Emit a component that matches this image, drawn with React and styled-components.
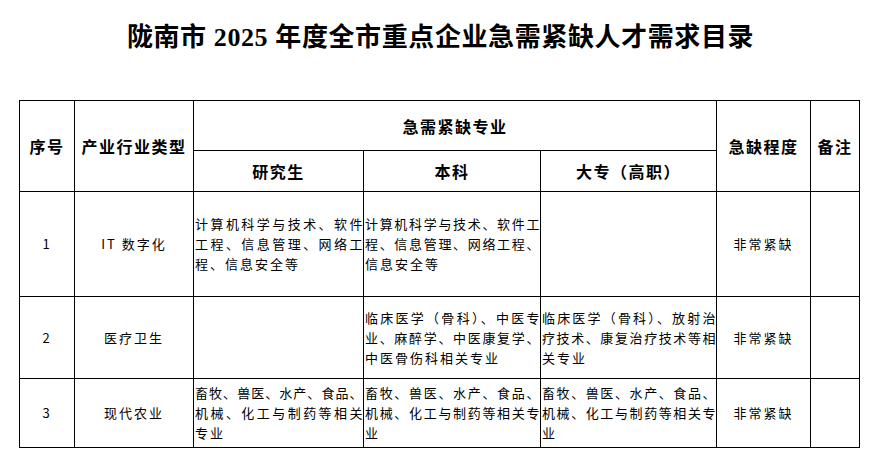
import React from 'react';
import styled, { createGlobalStyle } from 'styled-components';

const GlobalStyle = createGlobalStyle`
  html, body {
    margin: 0;
    padding: 0;
    background: #fff;
  }
  body {
    font-family: "Noto Sans CJK SC", "Liberation Sans", sans-serif;
    color: #000;
  }
`;

const Page = styled.div`
  width: 875px;
  height: 476px;
  background: #fff;
  overflow: hidden;
`;

const Title = styled.h1`
  margin: 0;
  padding: 21px 0 0 6px;
  text-align: center;
  font-family: "Liberation Serif", "Noto Sans CJK SC", serif;
  font-size: 26px;
  line-height: 34px;
  font-weight: 700;
  letter-spacing: 0.6px;
`;

const Sheet = styled.div`
  margin: 45px 0 0 19px;
  display: grid;
  grid-template-columns: 55px 119px 170px 177px 176px 94px 49px;
  grid-template-rows: 50px 41px 105px 82px 69px;
  width: max-content;
  border-top: 1px solid #000;
  border-left: 1px solid #000;
`;

const Cell = styled.div`
  box-sizing: border-box;
  border-right: 1px solid #000;
  border-bottom: 1px solid #000;
  grid-column: ${(p) => p.$col || 'auto'};
  grid-row: ${(p) => p.$row || 'auto'};
  display: flex;
  align-items: center;
  justify-content: ${(p) => (p.$left ? 'flex-start' : 'center')};
  padding-left: ${(p) => (p.$left ? '1px' : '0')};
  overflow: hidden;
`;

const HeadText = styled.span`
  font-family: "Noto Sans CJK SC", serif;
  font-size: 16px;
  font-weight: 700;
  letter-spacing: 1.5px;
`;

const BodyText = styled.span`
  font-size: 13px;
  line-height: 20px;
  letter-spacing: 2px;
`;

const Lines = styled.div`
  width: 100%;
  display: flex;
  flex-direction: column;
`;

const Line = styled.div`
  font-size: 13px;
  line-height: 20px;
  white-space: nowrap;
  letter-spacing: ${(p) => (p.$full ? '0.5px' : '2px')};
  text-align: ${(p) => (p.$full ? 'justify' : 'left')};
  text-align-last: ${(p) => (p.$full ? 'justify' : 'left')};
`;

const rows = [
  {
    no: '1',
    industry: 'IT 数字化',
    grad: ['计算机科学与技术、软件', '工程、信息管理、网络工', '程、信息安全等'],
    bachelor: ['计算机科学与技术、软件工', '程、信息管理、网络工程、', '信息安全等'],
    college: [],
    level: '非常紧缺',
  },
  {
    no: '2',
    industry: '医疗卫生',
    grad: [],
    bachelor: ['临床医学（骨科）、中医专', '业、麻醉学、中医康复学、', '中医骨伤科相关专业'],
    college: ['临床医学（骨科）、放射治', '疗技术、康复治疗技术等相', '关专业'],
    level: '非常紧缺',
  },
  {
    no: '3',
    industry: '现代农业',
    grad: ['畜牧、兽医、水产、食品、', '机械、化工与制药等相关', '专业'],
    bachelor: ['畜牧、兽医、水产、食品、', '机械、化工与制药等相关专', '业'],
    college: ['畜牧、兽医、水产、食品、', '机械、化工与制药等相关专', '业'],
    level: '非常紧缺',
  },
];

function MajorCell({ lines }) {
  return (
    <Cell $left>
      {lines.length > 0 && (
        <Lines>
          {lines.map((text, i) => (
            <Line key={i} $full={i < lines.length - 1}>
              {text}
            </Line>
          ))}
        </Lines>
      )}
    </Cell>
  );
}

export default function App() {
  return (
    <Page>
      <GlobalStyle />
      <Title>陇南市 2025 年度全市重点企业急需紧缺人才需求目录</Title>
      <Sheet>
        <Cell $row="1 / 3"><HeadText>序号</HeadText></Cell>
        <Cell $row="1 / 3"><HeadText>产业行业类型</HeadText></Cell>
        <Cell $col="3 / 6"><HeadText>急需紧缺专业</HeadText></Cell>
        <Cell $row="1 / 3" $col="6"><HeadText>急缺程度</HeadText></Cell>
        <Cell $row="1 / 3" $col="7"><HeadText>备注</HeadText></Cell>
        <Cell $col="3" $row="2"><HeadText>研究生</HeadText></Cell>
        <Cell $col="4" $row="2"><HeadText>本科</HeadText></Cell>
        <Cell $col="5" $row="2"><HeadText>大专（高职）</HeadText></Cell>

        {rows.map((r) => (
          <React.Fragment key={r.no}>
            <Cell><BodyText>{r.no}</BodyText></Cell>
            <Cell><BodyText>{r.industry}</BodyText></Cell>
            <MajorCell lines={r.grad} />
            <MajorCell lines={r.bachelor} />
            <MajorCell lines={r.college} />
            <Cell><BodyText>{r.level}</BodyText></Cell>
            <Cell />
          </React.Fragment>
        ))}
      </Sheet>
    </Page>
  );
}
